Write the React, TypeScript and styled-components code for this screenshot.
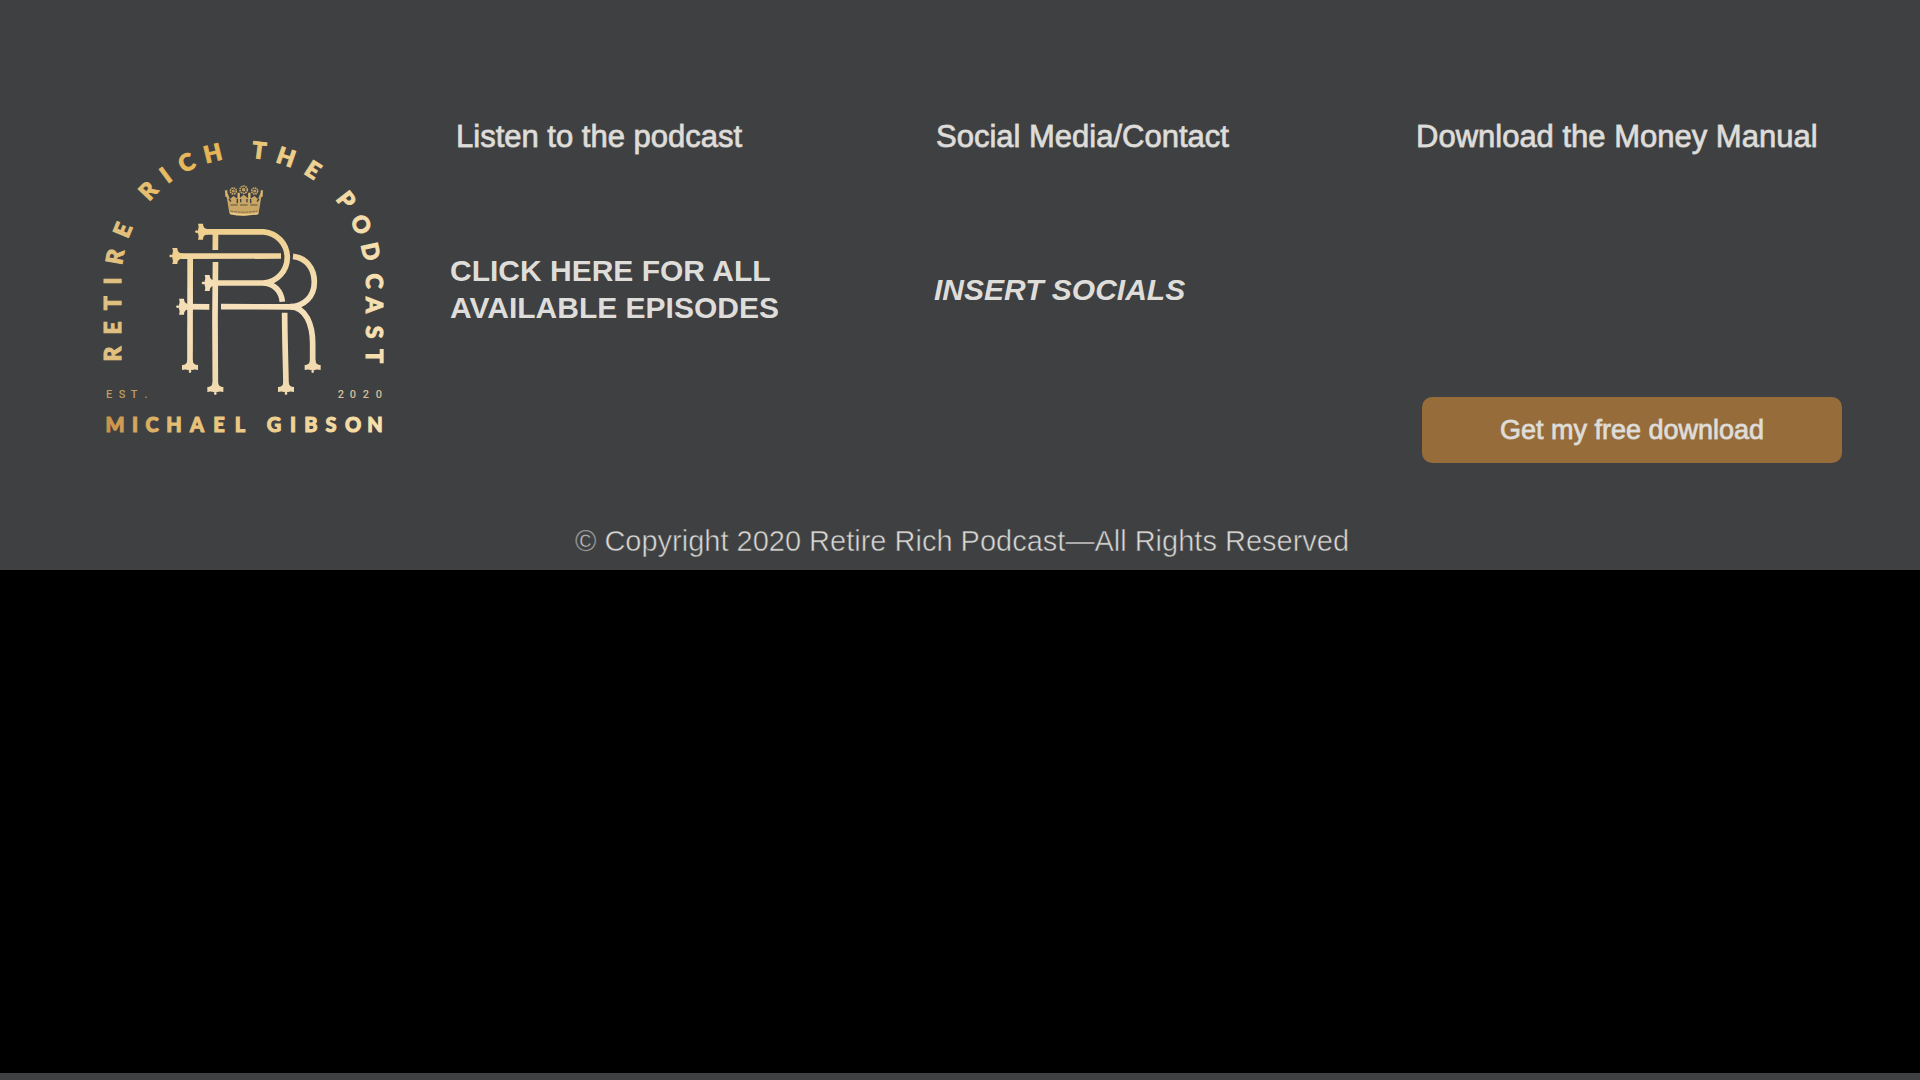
import React from "react";
import styled, { createGlobalStyle } from "styled-components";

const slate = "#3e4042";
const ink = "#dfddd9";
const inkEdge = "rgba(223, 221, 217, 0.8)";
const slateEdge = "rgba(62, 64, 66, 0.6)";

const GlobalStyle = createGlobalStyle`
  *, *::before, *::after { box-sizing: border-box; }
  body {
    margin: 0;
    background: #000;
    color: ${ink};
    font-family: "Liberation Sans", Arial, sans-serif;
  }
`;

const Page = styled.div`
  display: flex;
  flex-direction: column;
  min-height: 100vh;
`;

const Footer = styled.footer`
  display: flex;
  flex-direction: column;
  background: ${slate};
  padding: 119px 78px 11px 90px;
`;

const Columns = styled.div`
  display: grid;
  grid-template-columns: 360fr 480fr 480fr 432fr;
`;

const LogoLink = styled.a`
  display: block;
  padding-top: 11px;
`;

const LogoSvg = styled.svg`
  display: block;
  width: 100%;
  max-width: 310px;
  height: auto;
`;

const Column = styled.section`
  display: flex;
  flex-direction: column;
`;

const Heading = styled.h2`
  margin: 0;
  padding-left: 6px;
  font-size: 31px;
  line-height: 36px;
  font-weight: 400;
  -webkit-text-stroke: 1px ${inkEdge};
`;

const Body = styled.div`
  display: flex;
  align-items: center;
  min-height: 74px;
  margin-top: 97px;
`;

const TextLink = styled.a<{ $slanted?: boolean }>`
  max-width: 340px;
  color: inherit;
  text-decoration: none;
  font-size: 30px;
  line-height: 37px;
  font-weight: 700;
  font-style: ${(p) => (p.$slanted ? "italic" : "normal")};
  padding-left: ${(p) => (p.$slanted ? "4px" : "0")};
`;

const DownloadButton = styled.button`
  height: 66px;
  margin: 242px 0 0 12px;
  border: 0;
  border-radius: 10px;
  background: #966c3b;
  color: ${ink};
  font-family: inherit;
  font-size: 27px;
  line-height: 32px;
  -webkit-text-stroke: 1px ${inkEdge};
  cursor: pointer;
`;

const Copyright = styled.p`
  margin: 60px 0 0;
  padding-right: 8px;
  font-size: 29px;
  line-height: 36px;
  text-align: center;
  -webkit-text-stroke: 1px ${slateEdge};
`;

const Empty = styled.main`
  flex: 1;
  background: #000;
`;

const NextStrip = styled.div`
  height: 7px;
  background: ${slate};
`;

const finial =
  "M-8 -24 C-8 -14 -14 -9 -24 -9 V6 C-16 3 -9 4 -5 7 L-3 5 V8 A4 4 0 1 0 3 8 V5 L5 7 C9 4 16 3 24 6 V-9 C14 -9 8 -14 8 -24 Z";

const leftEnds = [[330, 305], [253, 378], [350, 459], [273, 530]];
const lowerEnds = [[300, 714], [376, 780], [588, 780], [668, 714]];

function Rosette({ x, y, r }: { x: number; y: number; r: number }) {
  return (
    <g>
      <circle cx={x} cy={y} r={r} fill="none" stroke="#c9a664" strokeWidth="5" strokeDasharray="5 2" />
      <circle cx={x} cy={y} r={r / 2} fill="#b99a60" />
    </g>
  );
}

function Crown() {
  return (
    <g>
      <path d="M404 180 L414 192 L420 208 L430 198 L445 208 L461 194 L478 208 L494 198 L504 208 L510 192 L520 180 L513 206 L506 250 Q461 263 418 250 L411 206 Z" fill="#c9a664" />
      <path d="M409 181 V200 M515 181 V200" stroke="#dcb870" strokeWidth="6" />
      <Rosette x={430} y={183} r={9} />
      <Rosette x={461} y={179} r={11} />
      <Rosette x={494} y={183} r={9} />
      <path d="M446 188 V208 M478 188 V208" stroke="#dcb870" strokeWidth="7" />
      <path d="M417 207 L423 215 M442 207 V220 M452 207 V217 M471 207 V217 M482 207 V220 M507 207 L501 215" stroke={slate} strokeWidth="4" />
      <path d="M421 225 H443 M450 225 H473 M481 225 H503" stroke="#5d5440" strokeWidth="3" />
      <path d="M421 243 Q461 250 503 243" fill="none" stroke="#7d6b48" strokeWidth="3" strokeDasharray="9 2" />
      <path d="M420 250 Q461 259 505 250" fill="none" stroke="#ecca83" strokeWidth="5" />
    </g>
  );
}

function Logo() {
  return (
    <LogoSvg viewBox="0 0 310 310" role="img" aria-label="Retire Rich the Podcast">
      <defs>
        <linearGradient id="arch" gradientUnits="userSpaceOnUse" x1="10" y1="0" x2="300" y2="0">
          <stop offset="0" stopColor="#dfc287" />
          <stop offset="0.2" stopColor="#e7bd68" />
          <stop offset="0.38" stopColor="#e6b452" />
          <stop offset="0.6" stopColor="#ebca82" />
          <stop offset="1" stopColor="#f7e3b8" />
        </linearGradient>
        <linearGradient id="mono" gradientUnits="userSpaceOnUse" x1="0" y1="290" x2="0" y2="790">
          <stop offset="0" stopColor="#efcf8c" />
          <stop offset="0.45" stopColor="#f6e1bc" />
          <stop offset="1" stopColor="#f0d9ad" />
        </linearGradient>
        <linearGradient id="name" gradientUnits="userSpaceOnUse" x1="17" y1="0" x2="293" y2="0">
          <stop offset="0" stopColor="#c8944a" />
          <stop offset="0.25" stopColor="#e6bf74" />
          <stop offset="1" stopColor="#f8e2ae" />
        </linearGradient>
        <path id="archLine" d="M31 232 V150 A122.25 122.25 0 0 1 275.5 150 V244" />
      </defs>
      <text fill="url(#arch)" stroke="url(#arch)" strokeWidth="1" fontFamily="Lato, sans-serif" fontWeight="900" fontSize="23" textAnchor="middle">
        <textPath href="#archLine">
          <tspan x="8 34 59 81 104 130">RETIRE</tspan>
          <tspan x="174 196 219 245">RICH</tspan>
          <tspan x="289 315 343">THE</tspan>
          <tspan x="385 412 439 467 491 518 542">PODCAST</tspan>
        </textPath>
      </text>
      <g transform="scale(0.33333)">
        <Crown />
        <g fill="none" stroke="url(#mono)" strokeWidth="17">
          <path d="M335 305.5 H521 A77 77 0 0 1 521 459 H355" />
          <path d="M521 459 C554 461 574 484 577 515" />
          <path d="M584 548 C584 620 587 700 588 765" />
          <path d="M376.5 305 L376 360 M376.5 396 L375 560 L376 765" />
          <path d="M262 378.5 L573 378" />
          <path d="M609 379 C648 383 673 415 673 456 C673 500 642 530 600 530" />
          <path d="M393 530 L600 530.5 C648 530 668 585 668 640 V700" />
          <path d="M282 530 L358 530.5" />
          <path d="M300.5 378 L300 700" />
        </g>
        <g>
          {leftEnds.map(([x, y]) => (
            <path key={x} d={finial} transform={`translate(${x} ${y}) rotate(90)`} fill={y < 400 ? "#f0d08e" : "#f4deb4"} />
          ))}
          {lowerEnds.map(([x, y]) => (
            <path key={x} d={finial} transform={`translate(${x} ${y})`} fill="#f2dab0" />
          ))}
        </g>
      </g>
      <g fontFamily="Roboto, sans-serif" fontWeight="500" fontSize="11" textAnchor="middle">
        <text x="19 32 44 56" y="268" fill="#bf9c60">EST.</text>
        <text x="251 263 276 289" y="268" fill="#d2bf98">2020</text>
      </g>
      <text fill="url(#name)" stroke="url(#name)" strokeWidth="1" fontFamily="Lato, sans-serif" fontWeight="900" fontSize="20" textAnchor="middle" y="302">
        <tspan x="25 45 62 84 107 129 150">MICHAEL</tspan>
        <tspan x="184 203 221 241 263 285">GIBSON</tspan>
      </text>
    </LogoSvg>
  );
}

export default function App() {
  return (
    <Page>
      <GlobalStyle />
      <Footer>
        <Columns>
          <LogoLink href="#home">
            <Logo />
          </LogoLink>
          <Column>
            <Heading>Listen to the podcast</Heading>
            <Body>
              <TextLink href="#episodes">CLICK HERE FOR ALL AVAILABLE EPISODES</TextLink>
            </Body>
          </Column>
          <Column>
            <Heading>Social Media/Contact</Heading>
            <Body>
              <TextLink href="#socials" $slanted>INSERT SOCIALS</TextLink>
            </Body>
          </Column>
          <Column>
            <Heading>Download the Money Manual</Heading>
            <DownloadButton type="button">Get my free download</DownloadButton>
          </Column>
        </Columns>
        <Copyright>© Copyright 2020 Retire Rich Podcast—All Rights Reserved</Copyright>
      </Footer>
      <Empty />
      <NextStrip />
    </Page>
  );
}
